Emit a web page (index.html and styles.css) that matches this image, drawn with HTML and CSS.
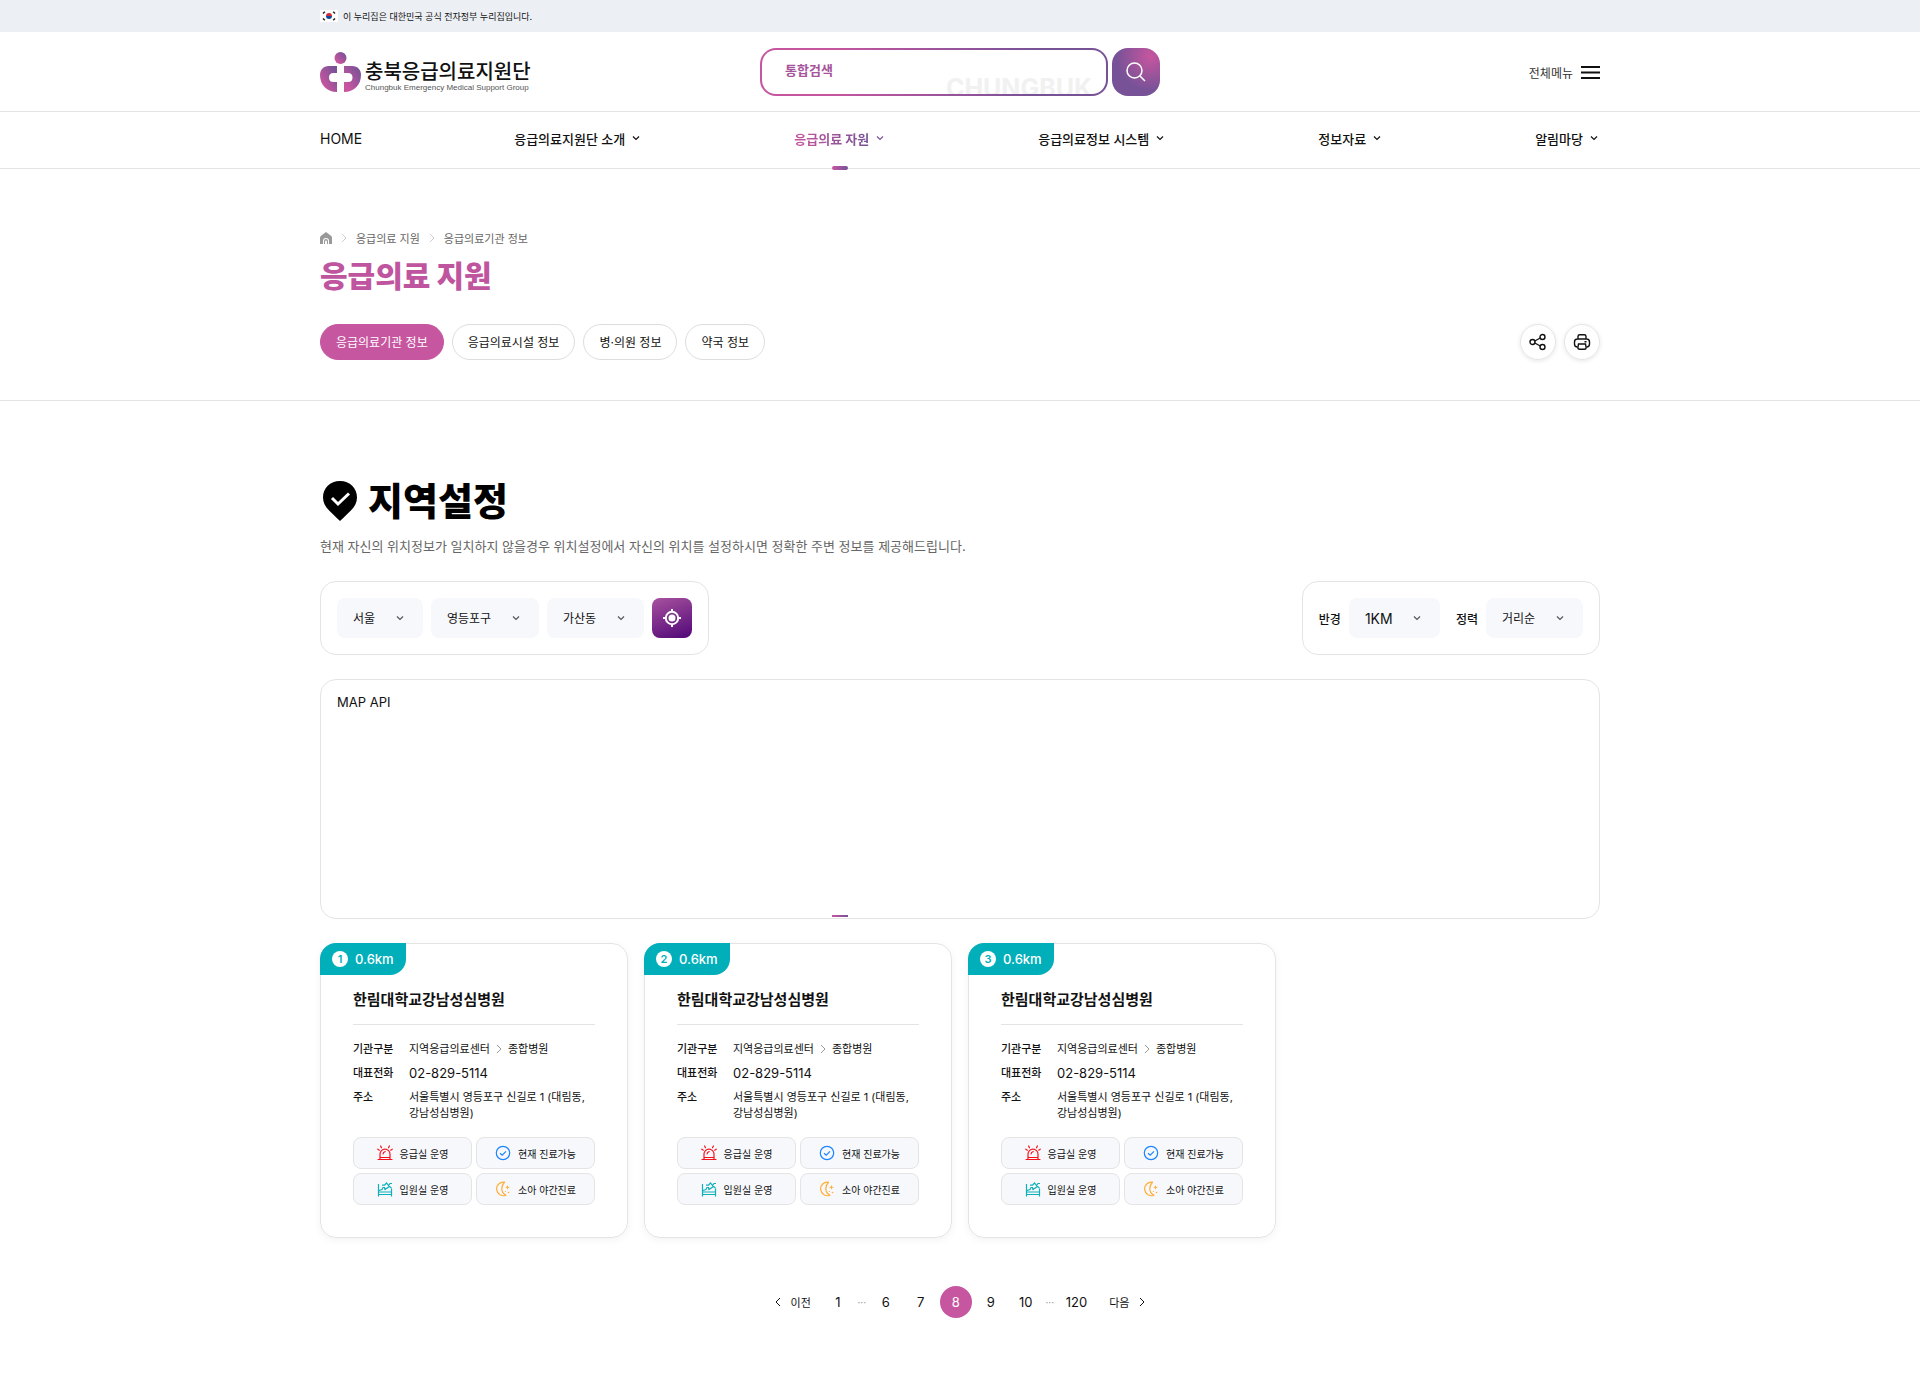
FILE: index.html
```html
<!DOCTYPE html>
<html lang="ko">
<head>
  <meta charset="UTF-8" />
  <meta name="viewport" content="width=device-width, initial-scale=1.0" />
  <title>응급의료기관 정보 | 충북응급의료지원단</title>
  <link rel="stylesheet" href="styles.css">
</head>
<body>
  <!-- shared icons -->
  <svg class="sprite" aria-hidden="true">
    <defs>
      <linearGradient id="brand" x1="0" y1="1" x2="1" y2="0">
        <stop offset="0.2" stop-color="#c9559f" /><stop offset="0.9" stop-color="#775297" />
      </linearGradient>
    </defs>
    <symbol id="i-down" viewBox="0 0 12 12"><path d="M3 4.5l3 3 3-3" fill="none" stroke="currentColor" stroke-width="1.2" /></symbol>
    <symbol id="i-right" viewBox="0 0 10 12"><path d="M3 2l4 4-4 4" fill="none" stroke="currentColor" /></symbol>
    <symbol id="i-siren" viewBox="0 0 16 16">
      <path d="M1 14.5h14M3 14V9a5 4.8 0 0 1 10 0v5M6 9c.2-1.400 1-2.100 2.200-2.300M3 12.500h10M3.600 1l.9 1.800M12.400 1l-.9 1.800M.8 4.200l1.500 1M15.200 4.200l-1.500 1" fill="none" stroke="#f8121c" stroke-width="1.200" stroke-linecap="round" />
    </symbol>
    <symbol id="i-check" viewBox="0 0 16 16">
      <circle cx="8" cy="8" r="6.700" fill="none" stroke="#1b84ff" stroke-width="1.200" />
      <path d="M5 8.200l2.200 2 3.800-3.800" fill="none" stroke="#1b84ff" stroke-width="1.200" />
    </symbol>
    <symbol id="i-bed" viewBox="0 0 16 16">
      <path d="M1.500 3v12.500M14.500 7.500v8M1.500 13.500h13M1.500 11h13M2 9.500l3-1 1-2h1.500l.5 2 4.500-3 2 1.500M5 4.200h2.500L9.500 2l2 2.500 1.500-2h2" fill="none" stroke="#10b0b8" stroke-width="1.200" />
    </symbol>
    <symbol id="i-moon" viewBox="0 0 16 16">
      <path d="M9.500 1.200A6.800 6.800 0 1 0 11 14.200C7.800 12.800 6.800 10.500 6.800 7.800c0-2.500 .8-4.800 2.700-6.600z" fill="none" stroke="#ffae35" stroke-width="1.200" stroke-linejoin="round" />
      <path d="M12.500 3.800l.6 1.900 1.900.6-1.900.6-.6 1.900-.6-1.900-1.900-.6 1.900-.6z" fill="#ffae35" />
      <circle cx="13.500" cy="11.500" r=".8" fill="#ffae35" /><circle cx="10.500" cy="10.500" r=".6" fill="#ffae35" />
    </symbol>
  </svg>

  <div class="gov">
    <div class="inner gov-inner">
      <svg class="flag" viewBox="0 0 18 12" aria-hidden="true">
        <rect width="18" height="12" fill="#fff" />
        <path d="M6 6a3 3 0 0 1 6 0z" fill="#cd2e3a" />
        <path d="M6 6a3 3 0 0 0 6 0z" fill="#0f4a9c" />
        <path d="M3 3.500l1.800-1.700M3 8.500l1.800 1.700M15 3.500l-1.800-1.700M15 8.500l-1.800 1.700" stroke="#222" stroke-width="1.500" />
      </svg>
      <span>이 누리집은 대한민국 공식 전자정부 누리집입니다.</span>
    </div>
  </div>

  <header class="header">
    <div class="inner header-inner">
      <a class="logo" href="#">
        <svg class="logo-mark" viewBox="0 0 41 40" aria-hidden="true">
          <g fill="url(#brand)">
            <circle cx="20.500" cy="6" r="6" />
            <path d="M17 14H9C3 14 0 18 0 23c0 10 7 17 17 17V30H13.500q-4.500 0-4.500-4.500t4.500-4.500H17z" />
            <path d="M24 14h8c6 0 9 4 9 9 0 10-7 17-17 17V30h4q4.500 0 4.500-4.500T28 21h-4z" />
          </g>
        </svg>
        <span class="logo-text">
          <strong>충북응급의료지원단</strong>
          <small>Chungbuk Emergency Medical Support Group</small>
        </span>
      </a>
      <form class="search">
        <div class="search-box">
          <span class="search-mark" aria-hidden="true">CHUNGBUK</span>
          <input type="text" placeholder="통합검색" aria-label="통합검색">
        </div>
        <button class="search-btn" type="button" aria-label="검색">
          <svg viewBox="0 0 20 20"><circle cx="8.500" cy="8.500" r="7.500" /><path d="M14 14l5 5" /></svg>
        </button>
      </form>
      <button class="all-menu" type="button">전체메뉴
        <svg viewBox="0 0 19 13" aria-hidden="true"><path d="M0 1h19M0 6.500h19M0 12h19" /></svg>
      </button>
    </div>
  </header>

  <nav class="nav">
    <ul class="inner nav-list">
      <li><a class="home" href="#">HOME</a></li>
      <li><a href="#">응급의료지원단 소개<svg><use href="#i-down" /></svg></a></li>
      <li class="active"><a href="#"><span>응급의료 자원</span><svg><use href="#i-down" /></svg></a></li>
      <li><a href="#">응급의료정보 시스템<svg><use href="#i-down" /></svg></a></li>
      <li><a href="#">정보자료<svg><use href="#i-down" /></svg></a></li>
      <li><a href="#">알림마당<svg><use href="#i-down" /></svg></a></li>
    </ul>
  </nav>

  <section class="sub">
    <div class="inner">
      <div class="crumb">
        <a href="#" aria-label="홈">
          <svg class="crumb-home" viewBox="0 0 12 12"><path d="M6 0l5 3.800q1 .8 1 2V12H9V9a3 3 0 0 0-6 0v3H0V5.800q0-1.200 1-2z" /><path d="M4 12V9a2 2 0 0 1 4 0v3H7V9.500a1 1 0 0 0-2 0V12z" /></svg>
        </a>
        <svg class="crumb-arrow"><use href="#i-right" /></svg>
        <a href="#">응급의료 지원</a>
        <svg class="crumb-arrow"><use href="#i-right" /></svg>
        <a href="#">응급의료기관 정보</a>
      </div>
      <h1>응급의료 지원</h1>
      <div class="sub-bar">
        <ul class="tabs">
          <li><a class="on" href="#">응급의료기관 정보</a></li>
          <li><a href="#">응급의료시설 정보</a></li>
          <li><a href="#">병·의원 정보</a></li>
          <li><a href="#">약국 정보</a></li>
        </ul>
        <div class="tools">
          <button type="button" aria-label="공유">
            <svg viewBox="0 0 18 18"><circle cx="3.500" cy="9" r="2.500" /><circle cx="13.500" cy="4" r="2.500" /><circle cx="13.500" cy="14" r="2.500" /><path d="M5.800 8l5.500-3M5.800 10l5.500 3" /></svg>
          </button>
          <button type="button" aria-label="인쇄">
            <svg viewBox="0 0 18 18"><path d="M5 6V3.500q0-1.700 1.700-1.700h4.600q1.700 0 1.700 1.700V6M4.500 14Q1.500 14 1.500 11V9q0-3 3-3h9q3 0 3 3v2q0 3-3 3M11.500 8.800h2" /><path d="M5.500 11h7l.6 3.500q0 1.800-1.800 1.800H6.700q-1.800 0-1.800-1.800z" /></svg>
          </button>
        </div>
      </div>
    </div>
  </section>

  <main class="inner">
    <h2>
      <svg viewBox="0 0 40 40" aria-hidden="true"><path d="M20 0C10 0 3 7.200 3 16.500 3 26 11 31 20 40 29 31 37 26 37 16.500 37 7.200 30 0 20 0z" /><path class="tick" d="M12 17l6 6L29 12.500" /></svg>
      지역설정
    </h2>
    <p class="desc">현재 자신의 위치정보가 일치하지 않을경우 위치설정에서 자신의 위치를 설정하시면 정확한 주변 정보를 제공해드립니다.</p>

    <div class="filters">
      <div class="filter">
        <div class="select"><select aria-label="시도"><option>서울</option></select><svg><use href="#i-down" /></svg></div>
        <div class="select"><select aria-label="시군구"><option>영등포구</option></select><svg><use href="#i-down" /></svg></div>
        <div class="select"><select aria-label="읍면동"><option>가산동</option></select><svg><use href="#i-down" /></svg></div>
        <button class="locate" type="button" aria-label="현재 위치">
          <svg viewBox="0 0 18 18"><circle cx="9" cy="9" r="6.200" /><path d="M9 0v3M9 15v3M0 9h3M15 9h3" /><circle class="dot" cx="9" cy="9" r="3.500" /></svg>
        </button>
      </div>
      <div class="filter">
        <label for="radius">반경</label>
        <div class="select"><select id="radius" class="num"><option>1KM</option></select><svg><use href="#i-down" /></svg></div>
        <label for="sort">정력</label>
        <div class="select"><select id="sort"><option>거리순</option></select><svg><use href="#i-down" /></svg></div>
      </div>
    </div>

    <div class="map">MAP API</div>

    <div class="cards">
      <article class="card">
        <div class="tag"><em>1</em>0.6km</div>
        <h3>한림대학교강남성심병원</h3>
        <dl>
          <dt>기관구분</dt><dd>지역응급의료센터<svg><use href="#i-right" /></svg>종합병원</dd>
          <dt>대표전화</dt><dd class="tel">02-829-5114</dd>
          <dt>주소</dt><dd>서울특별시 영등포구 신길로 1 (대림동, 강남성심병원)</dd>
        </dl>
        <ul class="badges">
          <li><svg><use href="#i-siren" /></svg>응급실 운영</li>
          <li><svg><use href="#i-check" /></svg>현재 진료가능</li>
          <li><svg><use href="#i-bed" /></svg>입원실 운영</li>
          <li><svg><use href="#i-moon" /></svg>소아 야간진료</li>
        </ul>
      </article>
      <article class="card">
        <div class="tag"><em>2</em>0.6km</div>
        <h3>한림대학교강남성심병원</h3>
        <dl>
          <dt>기관구분</dt><dd>지역응급의료센터<svg><use href="#i-right" /></svg>종합병원</dd>
          <dt>대표전화</dt><dd class="tel">02-829-5114</dd>
          <dt>주소</dt><dd>서울특별시 영등포구 신길로 1 (대림동, 강남성심병원)</dd>
        </dl>
        <ul class="badges">
          <li><svg><use href="#i-siren" /></svg>응급실 운영</li>
          <li><svg><use href="#i-check" /></svg>현재 진료가능</li>
          <li><svg><use href="#i-bed" /></svg>입원실 운영</li>
          <li><svg><use href="#i-moon" /></svg>소아 야간진료</li>
        </ul>
      </article>
      <article class="card">
        <div class="tag"><em>3</em>0.6km</div>
        <h3>한림대학교강남성심병원</h3>
        <dl>
          <dt>기관구분</dt><dd>지역응급의료센터<svg><use href="#i-right" /></svg>종합병원</dd>
          <dt>대표전화</dt><dd class="tel">02-829-5114</dd>
          <dt>주소</dt><dd>서울특별시 영등포구 신길로 1 (대림동, 강남성심병원)</dd>
        </dl>
        <ul class="badges">
          <li><svg><use href="#i-siren" /></svg>응급실 운영</li>
          <li><svg><use href="#i-check" /></svg>현재 진료가능</li>
          <li><svg><use href="#i-bed" /></svg>입원실 운영</li>
          <li><svg><use href="#i-moon" /></svg>소아 야간진료</li>
        </ul>
      </article>
    </div>

    <nav class="paging" aria-label="페이지">
      <a class="prev" href="#"><svg><use href="#i-right" /></svg>이전</a>
      <a href="#">1</a>
      <span>···</span>
      <a href="#">6</a>
      <a href="#">7</a>
      <a class="on" href="#">8</a>
      <a href="#">9</a>
      <a href="#">10</a>
      <span>···</span>
      <a href="#">120</a>
      <a class="next" href="#">다음<svg><use href="#i-right" /></svg></a>
    </nav>
  </main>
</body>
</html>
```

FILE: styles.css
```css
:root {
  --pink: #c6569f;
  --purple: #775297;
  --teal: #00afba;
  --line: #e4e4e4;
  --soft: #f7f8fc;
  --fg: #111111;
  --gray: #666666;
}
* { box-sizing: border-box; margin: 0; padding: 0; }
body { background: #fff; color: var(--fg); font-family: 'Inter', 'Noto Sans CJK KR', sans-serif; font-size: 12px; }
a { color: inherit; text-decoration: none; }
ul { list-style: none; }
button, input, select { font: inherit; color: inherit; border: none; background: none; }
button { cursor: pointer; }
.sprite { position: absolute; width: 0; height: 0; }
.inner { width: 100%; max-width: 1280px; margin: 0 auto; }

/* top notice */
.gov { background: #eceff4; }
.gov-inner { display: flex; align-items: center; gap: 5px; height: 32px; font-size: 9px; }
.flag { width: 18px; height: 12px; }

/* header */
.header { border-bottom: 1px solid var(--line); }
.header-inner { display: grid; grid-template-columns: 1fr 400px 1fr; align-items: center; padding: 16px 0 15px; }
.logo { display: flex; align-items: center; gap: 4px; }
.logo-mark { width: 41px; height: 40px; }
.logo-text { display: flex; flex-direction: column; padding-top: 10px; }
.logo-text strong { font-size: 20px; line-height: 22px; font-weight: 500; }
.logo-text small { font: 8px/10px 'Liberation Sans', sans-serif; color: #555; }
.search { display: flex; gap: 4px; }
.search-box { position: relative; flex: 1; height: 48px; border: 2px solid transparent; border-radius: 16px; overflow: hidden; background: linear-gradient(#fff, #fff) padding-box, linear-gradient(90deg, var(--pink) 20%, var(--purple) 80%) border-box; }
.search-box input { position: relative; width: 100%; height: 40px; padding: 0 23px; outline: none; font-size: 13px; font-weight: 700; }
.search-box input::placeholder { color: #a8549c; opacity: 1; }
.search-mark { position: absolute; right: 14px; bottom: -9px; font-size: 25px; line-height: 30px; font-weight: 700; color: #f1f1f1; }
.search-btn { display: flex; align-items: center; justify-content: center; width: 48px; height: 48px; border-radius: 16px; background: radial-gradient(circle at 80% 18%, var(--pink), var(--purple) 62%); }
.search-btn svg { width: 20px; height: 20px; fill: none; stroke: #fff; stroke-width: 1.5; }
.all-menu { justify-self: end; display: flex; align-items: center; gap: 8px; color: #333; }
.all-menu svg { width: 19px; height: 13px; stroke: #111; stroke-width: 2; }

/* main menu */
.nav { border-bottom: 1px solid var(--line); }
.nav-list { display: flex; justify-content: space-between; }
.nav-list li { position: relative; }
.nav-list a { display: flex; align-items: center; gap: 5px; height: 56px; padding-bottom: 4px; font-size: 13px; font-weight: 500; }
.nav-list a.home { font-size: 14px; font-weight: 400; }
.nav-list svg { width: 12px; height: 12px; }
.nav-list .active span { background: linear-gradient(90deg, var(--pink), var(--purple)); background-clip: text; -webkit-background-clip: text; color: transparent; font-weight: 700; }
.nav-list .active svg { color: var(--purple); }
.nav-list .active::after { content: ''; position: absolute; left: 50%; bottom: -2px; width: 16px; height: 4px; margin-left: -8px; border-radius: 2px; background: linear-gradient(90deg, var(--pink), var(--purple)); }

/* page title */
.sub { border-bottom: 1px solid var(--line); padding: 60px 0 40px; }
.crumb { display: flex; align-items: center; height: 18px; font-size: 11px; color: var(--gray); }
.crumb-home { display: block; width: 12px; height: 12px; fill: #999; }
.crumb-arrow { width: 10px; height: 12px; margin: 0 7px; color: #ccc; }
h1 { margin-top: 8px; font-size: 30px; line-height: 42px; font-weight: 900; color: #c0559f; }
.sub-bar { display: flex; justify-content: space-between; margin-top: 27px; }
.tabs, .tools { display: flex; gap: 8px; }
.tabs a { display: flex; align-items: center; height: 36px; padding: 0 15px 2px; border: 1px solid #ddd; border-radius: 18px; }
.tabs .on { background: var(--pink); border-color: var(--pink); color: #fff; }
.tools button { display: flex; align-items: center; justify-content: center; width: 36px; height: 36px; border: 1px solid var(--line); border-radius: 50%; box-shadow: 0 1px 4px rgba(0,0,0,0.1); }
.tools svg { width: 18px; height: 18px; fill: none; stroke: #111; stroke-width: 1.4; }

/* region */
main { padding: 80px 0; }
h2 { display: flex; align-items: center; gap: 8px; font-size: 38px; line-height: 40px; font-weight: 900; color: #000; }
h2 svg { width: 40px; height: 40px; }
h2 .tick { fill: none; stroke: #fff; stroke-width: 3; }
.desc { margin: 12px 0 22px; font-size: 13px; line-height: 26px; color: var(--gray); }
.filters { display: flex; justify-content: space-between; }
.filter { display: flex; align-items: center; gap: 8px; padding: 16px; border: 1px solid var(--line); border-radius: 16px; }
.filter label { font-weight: 500; }
.filter .select + label { margin-left: 8px; }
.select { position: relative; }
.select select { appearance: none; height: 40px; padding: 0 47px 0 16px; border-radius: 8px; background: var(--soft); }
.select .num { font-size: 14px; }
.select svg { position: absolute; right: 17px; top: 14px; width: 12px; height: 12px; color: #555; pointer-events: none; }
.locate { display: flex; align-items: center; justify-content: center; width: 40px; height: 40px; border-radius: 8px; background: linear-gradient(160deg, #a8529e, #500778); }
.locate svg { width: 18px; height: 18px; fill: none; stroke: #fff; stroke-width: 2; }
.locate .dot { fill: #fff; stroke: none; }
.map { position: relative; height: 240px; margin: 24px 0; padding: 12px 16px; border: 1px solid var(--line); border-radius: 16px; font-size: 13px; line-height: 20px; }
.map::after { content: ''; position: absolute; left: 40%; bottom: 1px; width: 16px; height: 2px; background: linear-gradient(90deg, var(--pink), var(--purple)); }

/* hospital cards */
.cards { display: grid; grid-template-columns: repeat(4, 1fr); gap: 16px; }
.card { position: relative; padding: 44px 32px 32px; border: 1px solid var(--line); border-radius: 16px; box-shadow: 0 2px 8px rgba(0,0,0,0.05); }
.tag { position: absolute; left: -1px; top: -1px; display: flex; align-items: center; gap: 7px; height: 32px; padding: 0 12px; border-radius: 16px 0 16px 0; background: var(--teal); color: #fff; font-size: 13px; font-weight: 500; }
.tag em { width: 16px; height: 16px; border-radius: 50%; background: #fff; color: var(--teal); font-size: 11px; line-height: 16px; font-style: normal; font-weight: 600; text-align: center; }
.card h3 { padding-bottom: 12px; border-bottom: 1px solid var(--line); font-size: 15px; line-height: 24px; font-weight: 700; }
.card dl { display: grid; grid-template-columns: 56px 1fr; row-gap: 8px; margin: 16px 0; font-size: 11px; line-height: 16px; }
.card dt { font-weight: 500; }
.card dd svg { width: 10px; height: 12px; margin: 0 4px; vertical-align: -2px; color: #999; }
.card .tel { font-size: 13px; }
.badges { display: grid; grid-template-columns: 1fr 1fr; gap: 4px; }
.badges li { display: flex; align-items: center; justify-content: center; gap: 7px; height: 32px; border: 1px solid var(--line); border-radius: 8px; background: var(--soft); font-size: 10px; }
.badges svg { width: 16px; height: 16px; }

/* paging */
.paging { display: flex; justify-content: center; align-items: center; gap: 3px; margin-top: 48px; font-size: 13px; }
.paging a { display: flex; align-items: center; justify-content: center; min-width: 32px; height: 32px; padding: 0 8px; border-radius: 16px; }
.paging span { width: 10px; color: #999; font-size: 10px; text-align: center; }
.paging .on { background: var(--pink); color: #fff; }
.paging .prev, .paging .next { gap: 8px; font-size: 11px; }
.paging .next { padding-left: 11px; }
.paging svg { width: 10px; height: 12px; }
.paging .prev svg { transform: rotate(180deg); }
```
